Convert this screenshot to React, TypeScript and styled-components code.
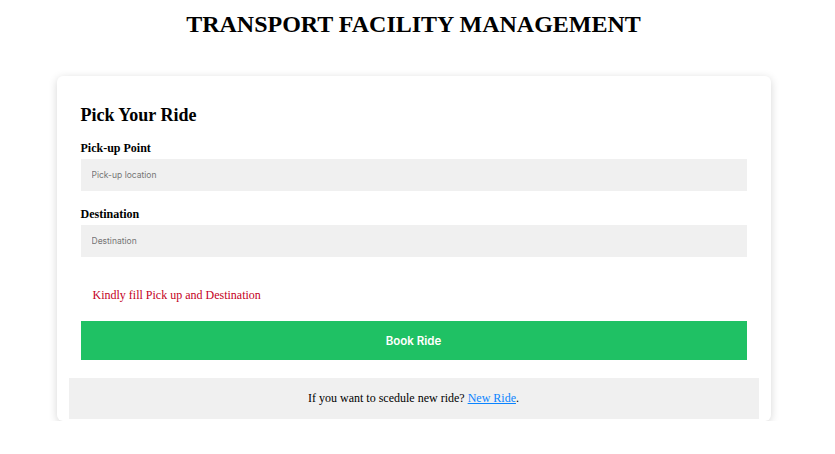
import React from "react";
import styled, { createGlobalStyle } from "styled-components";

const Global = createGlobalStyle`
  html, body { margin: 0; padding: 0; background: #ffffff; }
  body { font-family: "Liberation Serif", "Times New Roman", serif; color: #000; }
`;

const Page = styled.main`
  display: flex;
  flex-direction: column;
  align-items: center;
  padding: 10px 8px 0 0;
`;

const Title = styled.h1`
  margin: 0;
  font-size: 24px;
  line-height: 28px;
  font-weight: 700;
  text-align: center;
`;

const Card = styled.section`
  margin-top: 38px;
  width: 714px;
  box-sizing: border-box;
  background: #fff;
  border-radius: 6px;
  box-shadow: 0 2px 8px rgba(0, 0, 0, 0.17);
  padding: 24px 12px 2px;
  display: flex;
  flex-direction: column;
`;

const Form = styled.form`
  display: flex;
  flex-direction: column;
  padding: 0 12px;
`;

const Heading = styled.h3`
  margin: 4px 0 15px;
  font-size: 18px;
  line-height: 22px;
  font-weight: 700;
`;

const Label = styled.label`
  font-size: 12px;
  font-weight: 700;
  line-height: 14px;
  margin-bottom: 4px;
`;

const Input = styled.input<{ $gap?: number }>`
  height: 32px;
  border: none;
  outline: none;
  background: #f0f0f0;
  padding: 0 11px;
  font-family: Inter, "Noto Sans", sans-serif;
  font-size: 8.5px;
  color: #333;
  margin-bottom: ${(p) => p.$gap ?? 16}px;
  &::placeholder { color: #757575; }
`;

const ErrorText = styled.p`
  margin: 0 0 18px;
  padding-left: 12px;
  color: #c4001c;
  font-size: 12px;
  line-height: 16px;
`;

const Button = styled.button`
  height: 39px;
  border: none;
  background: #1fc164;
  color: #fff;
  font-family: Inter, "Noto Sans", sans-serif;
  font-weight: 600;
  font-size: 11.5px;
  cursor: pointer;
`;

const Footer = styled.div`
  margin-top: 18px;
  background: #f0f0f0;
  height: 41px;
  display: flex;
  align-items: center;
  justify-content: center;
  font-size: 12px;
  white-space: pre;
`;

const Link = styled.a`
  color: #0a84ff;
  text-decoration: underline;
`;

export default function App() {
  return (
    <>
      <Global />
      <Page>
        <Title>TRANSPORT FACILITY MANAGEMENT</Title>
        <Card>
          <Form onSubmit={(e) => e.preventDefault()}>
            <Heading>Pick Your Ride</Heading>
            <Label>Pick-up Point</Label>
            <Input placeholder="Pick-up location" />
            <Label>Destination</Label>
            <Input placeholder="Destination" $gap={30} />
            <ErrorText>Kindly fill Pick up and Destination</ErrorText>
            <Button type="submit">Book Ride</Button>
          </Form>
          <Footer>
            If you want to scedule new ride? <Link href="#">New Ride</Link>.
          </Footer>
        </Card>
      </Page>
    </>
  );
}
